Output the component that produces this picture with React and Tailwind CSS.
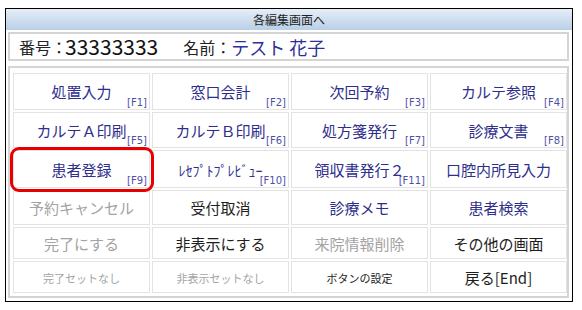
import React from "react";

const BLUE = "text-[#2e2e8c]";
const GRAY = "text-[#a3a3a3]";
const BLACK = "text-[#1e1e1e]";

const buttons = [
  { label: "処置入力", key: "[F1]", color: BLUE },
  { label: "窓口会計", key: "[F2]", color: BLUE },
  { label: "次回予約", key: "[F3]", color: BLUE },
  { label: "カルテ参照", key: "[F4]", color: BLUE },
  { label: "カルテＡ印刷", key: "[F5]", color: BLUE },
  { label: "カルテＢ印刷", key: "[F6]", color: BLUE },
  { label: "処方箋発行", key: "[F7]", color: BLUE },
  { label: "診療文書", key: "[F8]", color: BLUE },
  { label: "患者登録", key: "[F9]", color: BLUE },
  { label: "ﾚｾﾌﾟﾄﾌﾟﾚﾋﾞｭｰ", key: "[F10]", color: BLUE, size: "text-[14px]" },
  { label: "領収書発行２", key: "[F11]", color: BLUE },
  { label: "口腔内所見入力", color: BLUE },
  { label: "予約キャンセル", color: GRAY },
  { label: "受付取消", color: BLACK },
  { label: "診療メモ", color: BLUE },
  { label: "患者検索", color: BLUE },
  { label: "完了にする", color: GRAY },
  { label: "非表示にする", color: BLACK },
  { label: "来院情報削除", color: GRAY },
  { label: "その他の画面", color: BLACK },
  { label: "完了セットなし", color: GRAY, size: "text-[11px]" },
  { label: "非表示セットなし", color: GRAY, size: "text-[11px]" },
  { label: "ボタンの設定", color: BLACK, size: "text-[11px]" },
  { label: "戻る[End]", color: BLACK },
];

export default function App() {
  return (
    <div className="relative w-[582px] h-[310px] bg-white font-['Noto_Sans_CJK_JP',sans-serif] pt-[8px] pl-[5px]">
      <div className="w-[568px] h-[294px] border border-black flex flex-col">
        <div className="h-[21px] bg-gradient-to-b from-[#e6eef8] to-[#b9cfe7] flex items-center justify-center text-[12px] text-[#222]">
          各編集画面へ
        </div>
        <div className="ml-[2px] mt-[2px] w-[561px] h-[29px] border-2 border-[#d4d4d4] flex items-center pl-[9px] leading-none">
          <span className="text-[16px] text-[#222]">番号：</span>
          <span className="text-[21px] text-[#111] ml-[-2px]">33333333</span>
          <span className="text-[16px] text-[#222] ml-[25px]">名前：</span>
          <span className="text-[18px] text-[#2e2e9a]">テスト 花子</span>
        </div>
        <div className="ml-[2px] mt-[5px] w-[561px] h-[232px] border-2 border-[#d4d4d4] pl-[3px] pt-[5px]">
          <div className="grid grid-cols-[repeat(4,137px)] grid-rows-[37px_36px_38px_35px_32px_32px] gap-[2px]">
            {buttons.map((b) => (
              <div
                key={b.label}
                className={`relative border border-[#e3e3e3] bg-white flex items-center justify-center pt-[2px] ${b.size || "text-[15px]"} ${b.color}`}
              >
                {b.label}
                {b.key && (
                  <span className="absolute right-[2px] bottom-[-1px] text-[10px] text-[#4f4fa8] font-['DejaVu_Sans',sans-serif]">
                    {b.key}
                  </span>
                )}
              </div>
            ))}
          </div>
        </div>
      </div>
      <div className="absolute left-[10px] top-[147px] w-[144px] h-[45px] border-[3px] border-[#e60000] rounded-[9px]" />
    </div>
  );
}
